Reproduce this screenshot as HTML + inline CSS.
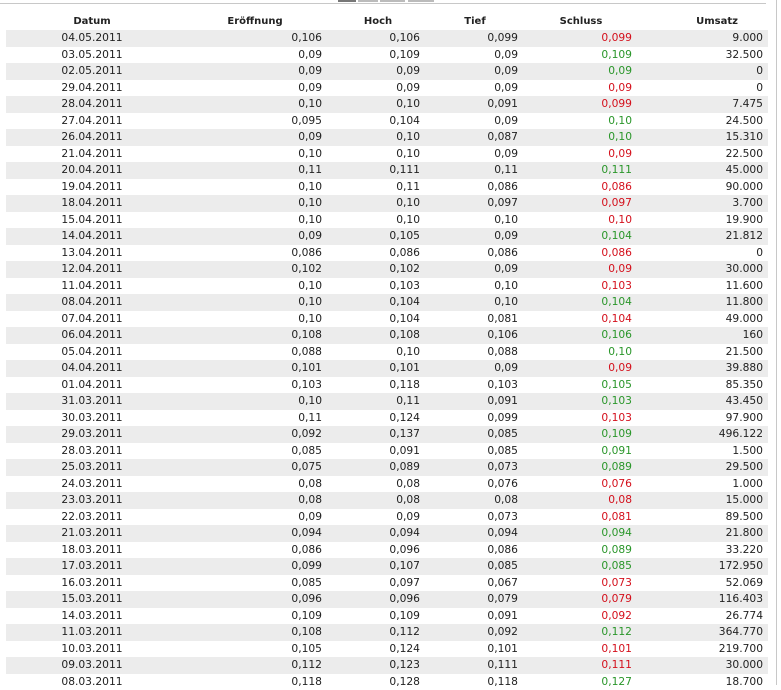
<!DOCTYPE html><html><head><style>
body{margin:0;width:781px;height:685px;overflow:hidden;background:#fff;font-family:"DejaVu Sans",Verdana,sans-serif;font-size:10.7px;color:#222;position:relative}
.top{position:absolute;left:0;top:3px;width:766px;height:1px;background:#c8c8c8}
.rl{position:absolute;left:776px;top:0;width:1px;height:685px;background:#c8c8c8}
.tab{position:absolute;top:0;height:2px;background:#bbb}
table{position:absolute;left:6px;top:13px;border-collapse:collapse;table-layout:fixed;width:762px}
th{font-weight:bold;height:17px;padding:0;text-align:center;font-size:10px}
td{height:16.5px;padding:0;text-align:right;line-height:16.5px;white-space:nowrap}
tr:nth-child(even) td{background:#ececec}
td:nth-child(1){text-align:center}
td:nth-child(2){padding-right:10px}
td:nth-child(3){padding-right:4px}
td:nth-child(4){padding-right:8px}
td:nth-child(5){padding-right:4px}
td:nth-child(6){padding-right:5px}
.r{color:#d4101c}.g{color:#2a962a}
</style></head><body>
<div class="top"></div><div class="rl"></div>
<div class="tab" style="left:338px;width:18px;background:#777"></div>
<div class="tab" style="left:358px;width:20px"></div>
<div class="tab" style="left:380px;width:25px"></div>
<div class="tab" style="left:408px;width:26px"></div>
<table>
<colgroup><col style="width:172px"><col style="width:154px"><col style="width:92px"><col style="width:102px"><col style="width:110px"><col style="width:132px"></colgroup>
<tr><th>Datum</th><th>Eröffnung</th><th>Hoch</th><th>Tief</th><th>Schluss</th><th style="padding-left:30px">Umsatz</th></tr>
<tr><td>04.05.2011</td><td>0,106</td><td>0,106</td><td>0,099</td><td class="r">0,099</td><td>9.000</td></tr>
<tr><td>03.05.2011</td><td>0,09</td><td>0,109</td><td>0,09</td><td class="g">0,109</td><td>32.500</td></tr>
<tr><td>02.05.2011</td><td>0,09</td><td>0,09</td><td>0,09</td><td class="g">0,09</td><td>0</td></tr>
<tr><td>29.04.2011</td><td>0,09</td><td>0,09</td><td>0,09</td><td class="r">0,09</td><td>0</td></tr>
<tr><td>28.04.2011</td><td>0,10</td><td>0,10</td><td>0,091</td><td class="r">0,099</td><td>7.475</td></tr>
<tr><td>27.04.2011</td><td>0,095</td><td>0,104</td><td>0,09</td><td class="g">0,10</td><td>24.500</td></tr>
<tr><td>26.04.2011</td><td>0,09</td><td>0,10</td><td>0,087</td><td class="g">0,10</td><td>15.310</td></tr>
<tr><td>21.04.2011</td><td>0,10</td><td>0,10</td><td>0,09</td><td class="r">0,09</td><td>22.500</td></tr>
<tr><td>20.04.2011</td><td>0,11</td><td>0,111</td><td>0,11</td><td class="g">0,111</td><td>45.000</td></tr>
<tr><td>19.04.2011</td><td>0,10</td><td>0,11</td><td>0,086</td><td class="r">0,086</td><td>90.000</td></tr>
<tr><td>18.04.2011</td><td>0,10</td><td>0,10</td><td>0,097</td><td class="r">0,097</td><td>3.700</td></tr>
<tr><td>15.04.2011</td><td>0,10</td><td>0,10</td><td>0,10</td><td class="r">0,10</td><td>19.900</td></tr>
<tr><td>14.04.2011</td><td>0,09</td><td>0,105</td><td>0,09</td><td class="g">0,104</td><td>21.812</td></tr>
<tr><td>13.04.2011</td><td>0,086</td><td>0,086</td><td>0,086</td><td class="r">0,086</td><td>0</td></tr>
<tr><td>12.04.2011</td><td>0,102</td><td>0,102</td><td>0,09</td><td class="r">0,09</td><td>30.000</td></tr>
<tr><td>11.04.2011</td><td>0,10</td><td>0,103</td><td>0,10</td><td class="r">0,103</td><td>11.600</td></tr>
<tr><td>08.04.2011</td><td>0,10</td><td>0,104</td><td>0,10</td><td class="g">0,104</td><td>11.800</td></tr>
<tr><td>07.04.2011</td><td>0,10</td><td>0,104</td><td>0,081</td><td class="r">0,104</td><td>49.000</td></tr>
<tr><td>06.04.2011</td><td>0,108</td><td>0,108</td><td>0,106</td><td class="g">0,106</td><td>160</td></tr>
<tr><td>05.04.2011</td><td>0,088</td><td>0,10</td><td>0,088</td><td class="g">0,10</td><td>21.500</td></tr>
<tr><td>04.04.2011</td><td>0,101</td><td>0,101</td><td>0,09</td><td class="r">0,09</td><td>39.880</td></tr>
<tr><td>01.04.2011</td><td>0,103</td><td>0,118</td><td>0,103</td><td class="g">0,105</td><td>85.350</td></tr>
<tr><td>31.03.2011</td><td>0,10</td><td>0,11</td><td>0,091</td><td class="g">0,103</td><td>43.450</td></tr>
<tr><td>30.03.2011</td><td>0,11</td><td>0,124</td><td>0,099</td><td class="r">0,103</td><td>97.900</td></tr>
<tr><td>29.03.2011</td><td>0,092</td><td>0,137</td><td>0,085</td><td class="g">0,109</td><td>496.122</td></tr>
<tr><td>28.03.2011</td><td>0,085</td><td>0,091</td><td>0,085</td><td class="g">0,091</td><td>1.500</td></tr>
<tr><td>25.03.2011</td><td>0,075</td><td>0,089</td><td>0,073</td><td class="g">0,089</td><td>29.500</td></tr>
<tr><td>24.03.2011</td><td>0,08</td><td>0,08</td><td>0,076</td><td class="r">0,076</td><td>1.000</td></tr>
<tr><td>23.03.2011</td><td>0,08</td><td>0,08</td><td>0,08</td><td class="r">0,08</td><td>15.000</td></tr>
<tr><td>22.03.2011</td><td>0,09</td><td>0,09</td><td>0,073</td><td class="r">0,081</td><td>89.500</td></tr>
<tr><td>21.03.2011</td><td>0,094</td><td>0,094</td><td>0,094</td><td class="g">0,094</td><td>21.800</td></tr>
<tr><td>18.03.2011</td><td>0,086</td><td>0,096</td><td>0,086</td><td class="g">0,089</td><td>33.220</td></tr>
<tr><td>17.03.2011</td><td>0,099</td><td>0,107</td><td>0,085</td><td class="g">0,085</td><td>172.950</td></tr>
<tr><td>16.03.2011</td><td>0,085</td><td>0,097</td><td>0,067</td><td class="r">0,073</td><td>52.069</td></tr>
<tr><td>15.03.2011</td><td>0,096</td><td>0,096</td><td>0,079</td><td class="r">0,079</td><td>116.403</td></tr>
<tr><td>14.03.2011</td><td>0,109</td><td>0,109</td><td>0,091</td><td class="r">0,092</td><td>26.774</td></tr>
<tr><td>11.03.2011</td><td>0,108</td><td>0,112</td><td>0,092</td><td class="g">0,112</td><td>364.770</td></tr>
<tr><td>10.03.2011</td><td>0,105</td><td>0,124</td><td>0,101</td><td class="r">0,101</td><td>219.700</td></tr>
<tr><td>09.03.2011</td><td>0,112</td><td>0,123</td><td>0,111</td><td class="r">0,111</td><td>30.000</td></tr>
<tr><td>08.03.2011</td><td>0,118</td><td>0,128</td><td>0,118</td><td class="g">0,127</td><td>18.700</td></tr>
</table>
</body></html>
